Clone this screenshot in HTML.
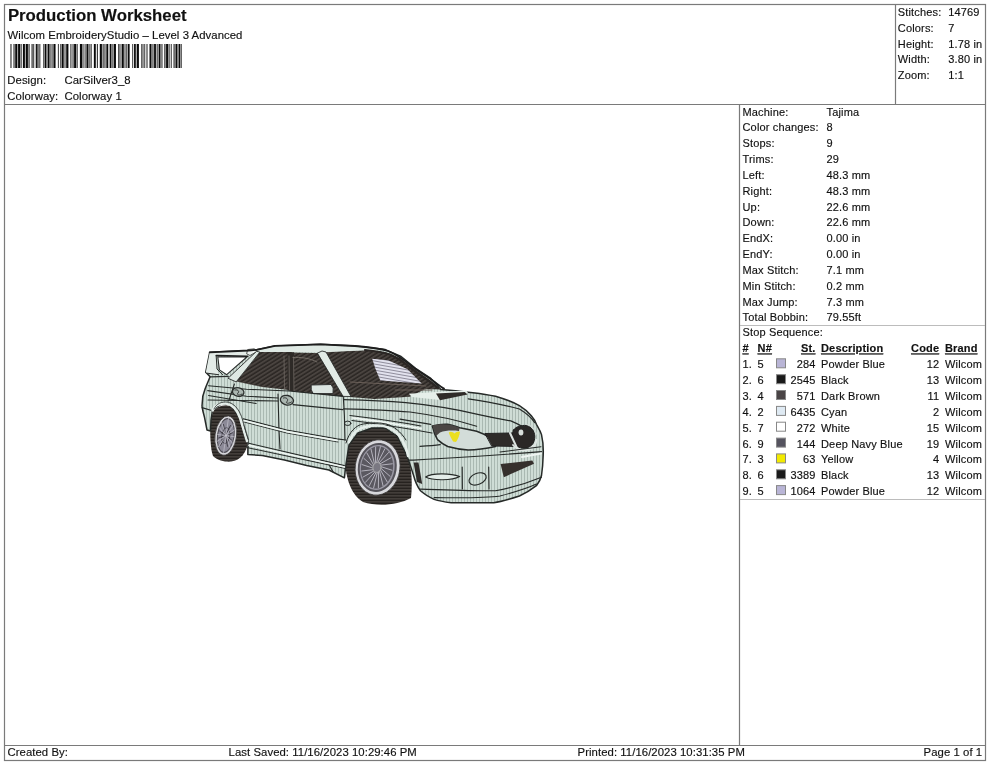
<!DOCTYPE html>
<html><head><meta charset="utf-8"><style>
html,body{margin:0;padding:0;background:#fff;width:990px;height:762px;overflow:hidden}
svg{display:block;will-change:transform}
text{font-family:"Liberation Sans",sans-serif;stroke:#111;stroke-width:0.15px}
</style></head><body>
<svg width="990" height="762" viewBox="0 0 990 762">
<rect width="990" height="762" fill="#fff"/>

<rect x="4.5" y="4.5" width="981" height="756" fill="none" stroke="#7a7a7a" stroke-width="1.2"/>
<line x1="4" y1="104.5" x2="986" y2="104.5" stroke="#7a7a7a" stroke-width="1.2"/>
<line x1="895.5" y1="4" x2="895.5" y2="105" stroke="#7a7a7a" stroke-width="1.2"/>
<line x1="739.5" y1="104" x2="739.5" y2="746" stroke="#7a7a7a" stroke-width="1.2"/>
<line x1="4" y1="745.5" x2="986" y2="745.5" stroke="#7a7a7a" stroke-width="1.2"/>
<line x1="740" y1="325.5" x2="985" y2="325.5" stroke="#bcbcbc" stroke-width="1"/>
<line x1="740" y1="499.5" x2="985" y2="499.5" stroke="#bcbcbc" stroke-width="1"/>

<g><rect x="10" y="44" width="1" height="24" fill="rgb(130,130,130)"/><rect x="11" y="44" width="1" height="24" fill="rgb(140,140,140)"/><rect x="13" y="44" width="1" height="24" fill="rgb(140,140,140)"/><rect x="14" y="44" width="1" height="24" fill="rgb(130,130,130)"/><rect x="15" y="44" width="1" height="24" fill="rgb(60,60,60)"/><rect x="16" y="44" width="1" height="24" fill="rgb(10,10,10)"/><rect x="17" y="44" width="1" height="24" fill="rgb(160,160,160)"/><rect x="18" y="44" width="1" height="24" fill="rgb(30,30,30)"/><rect x="19" y="44" width="1" height="24" fill="rgb(10,10,10)"/><rect x="20" y="44" width="1" height="24" fill="rgb(150,150,150)"/><rect x="21" y="44" width="1" height="24" fill="rgb(110,110,110)"/><rect x="22" y="44" width="1" height="24" fill="rgb(230,230,230)"/><rect x="23" y="44" width="1" height="24" fill="rgb(10,10,10)"/><rect x="24" y="44" width="1" height="24" fill="rgb(30,30,30)"/><rect x="25" y="44" width="1" height="24" fill="rgb(170,170,170)"/><rect x="26" y="44" width="1" height="24" fill="rgb(10,10,10)"/><rect x="27" y="44" width="1" height="24" fill="rgb(30,30,30)"/><rect x="28" y="44" width="1" height="24" fill="rgb(140,140,140)"/><rect x="29" y="44" width="1" height="24" fill="rgb(120,120,120)"/><rect x="31" y="44" width="1" height="24" fill="rgb(150,150,150)"/><rect x="32" y="44" width="1" height="24" fill="rgb(110,110,110)"/><rect x="33" y="44" width="1" height="24" fill="rgb(90,90,90)"/><rect x="34" y="44" width="1" height="24" fill="rgb(210,210,210)"/><rect x="35" y="44" width="1" height="24" fill="rgb(190,190,190)"/><rect x="36" y="44" width="1" height="24" fill="rgb(20,20,20)"/><rect x="37" y="44" width="1" height="24" fill="rgb(100,100,100)"/><rect x="38" y="44" width="1" height="24" fill="rgb(130,130,130)"/><rect x="39" y="44" width="1" height="24" fill="rgb(110,110,110)"/><rect x="40" y="44" width="1" height="24" fill="rgb(180,180,180)"/><rect x="43" y="44" width="1" height="24" fill="rgb(100,100,100)"/><rect x="44" y="44" width="1" height="24" fill="rgb(140,140,140)"/><rect x="45" y="44" width="1" height="24" fill="rgb(10,10,10)"/><rect x="46" y="44" width="1" height="24" fill="rgb(130,130,130)"/><rect x="47" y="44" width="1" height="24" fill="rgb(140,140,140)"/><rect x="48" y="44" width="1" height="24" fill="rgb(10,10,10)"/><rect x="49" y="44" width="1" height="24" fill="rgb(110,110,110)"/><rect x="50" y="44" width="1" height="24" fill="rgb(130,130,130)"/><rect x="51" y="44" width="1" height="24" fill="rgb(150,150,150)"/><rect x="52" y="44" width="1" height="24" fill="rgb(130,130,130)"/><rect x="53" y="44" width="1" height="24" fill="rgb(110,110,110)"/><rect x="54" y="44" width="1" height="24" fill="rgb(10,10,10)"/><rect x="55" y="44" width="1" height="24" fill="rgb(120,120,120)"/><rect x="57" y="44" width="1" height="24" fill="rgb(230,230,230)"/><rect x="58" y="44" width="1" height="24" fill="rgb(80,80,80)"/><rect x="60" y="44" width="1" height="24" fill="rgb(100,100,100)"/><rect x="61" y="44" width="1" height="24" fill="rgb(140,140,140)"/><rect x="62" y="44" width="1" height="24" fill="rgb(10,10,10)"/><rect x="63" y="44" width="1" height="24" fill="rgb(80,80,80)"/><rect x="64" y="44" width="1" height="24" fill="rgb(150,150,150)"/><rect x="65" y="44" width="1" height="24" fill="rgb(150,150,150)"/><rect x="66" y="44" width="1" height="24" fill="rgb(60,60,60)"/><rect x="67" y="44" width="1" height="24" fill="rgb(10,10,10)"/><rect x="68" y="44" width="1" height="24" fill="rgb(150,150,150)"/><rect x="70" y="44" width="1" height="24" fill="rgb(120,120,120)"/><rect x="71" y="44" width="1" height="24" fill="rgb(160,160,160)"/><rect x="72" y="44" width="1" height="24" fill="rgb(150,150,150)"/><rect x="73" y="44" width="1" height="24" fill="rgb(130,130,130)"/><rect x="74" y="44" width="1" height="24" fill="rgb(30,30,30)"/><rect x="75" y="44" width="1" height="24" fill="rgb(10,10,10)"/><rect x="76" y="44" width="1" height="24" fill="rgb(150,150,150)"/><rect x="77" y="44" width="1" height="24" fill="rgb(110,110,110)"/><rect x="79" y="44" width="1" height="24" fill="rgb(230,230,230)"/><rect x="80" y="44" width="1" height="24" fill="rgb(10,10,10)"/><rect x="81" y="44" width="1" height="24" fill="rgb(10,10,10)"/><rect x="82" y="44" width="1" height="24" fill="rgb(140,140,140)"/><rect x="83" y="44" width="1" height="24" fill="rgb(140,140,140)"/><rect x="84" y="44" width="1" height="24" fill="rgb(170,170,170)"/><rect x="85" y="44" width="1" height="24" fill="rgb(130,130,130)"/><rect x="86" y="44" width="1" height="24" fill="rgb(110,110,110)"/><rect x="87" y="44" width="1" height="24" fill="rgb(10,10,10)"/><rect x="88" y="44" width="1" height="24" fill="rgb(130,130,130)"/><rect x="89" y="44" width="1" height="24" fill="rgb(120,120,120)"/><rect x="90" y="44" width="1" height="24" fill="rgb(150,150,150)"/><rect x="91" y="44" width="1" height="24" fill="rgb(110,110,110)"/><rect x="93" y="44" width="1" height="24" fill="rgb(220,220,220)"/><rect x="94" y="44" width="1" height="24" fill="rgb(10,10,10)"/><rect x="95" y="44" width="1" height="24" fill="rgb(60,60,60)"/><rect x="96" y="44" width="1" height="24" fill="rgb(220,220,220)"/><rect x="97" y="44" width="1" height="24" fill="rgb(60,60,60)"/><rect x="99" y="44" width="1" height="24" fill="rgb(200,200,200)"/><rect x="100" y="44" width="1" height="24" fill="rgb(10,10,10)"/><rect x="101" y="44" width="1" height="24" fill="rgb(30,30,30)"/><rect x="102" y="44" width="1" height="24" fill="rgb(160,160,160)"/><rect x="103" y="44" width="1" height="24" fill="rgb(110,110,110)"/><rect x="104" y="44" width="1" height="24" fill="rgb(130,130,130)"/><rect x="105" y="44" width="1" height="24" fill="rgb(150,150,150)"/><rect x="106" y="44" width="1" height="24" fill="rgb(90,90,90)"/><rect x="107" y="44" width="1" height="24" fill="rgb(10,10,10)"/><rect x="108" y="44" width="1" height="24" fill="rgb(190,190,190)"/><rect x="109" y="44" width="1" height="24" fill="rgb(170,170,170)"/><rect x="110" y="44" width="1" height="24" fill="rgb(10,10,10)"/><rect x="111" y="44" width="1" height="24" fill="rgb(130,130,130)"/><rect x="112" y="44" width="1" height="24" fill="rgb(120,120,120)"/><rect x="113" y="44" width="1" height="24" fill="rgb(150,150,150)"/><rect x="114" y="44" width="1" height="24" fill="rgb(10,10,10)"/><rect x="115" y="44" width="1" height="24" fill="rgb(20,20,20)"/><rect x="118" y="44" width="1" height="24" fill="rgb(80,80,80)"/><rect x="119" y="44" width="1" height="24" fill="rgb(130,130,130)"/><rect x="120" y="44" width="1" height="24" fill="rgb(150,150,150)"/><rect x="121" y="44" width="1" height="24" fill="rgb(150,150,150)"/><rect x="122" y="44" width="1" height="24" fill="rgb(10,10,10)"/><rect x="123" y="44" width="1" height="24" fill="rgb(60,60,60)"/><rect x="124" y="44" width="1" height="24" fill="rgb(150,150,150)"/><rect x="125" y="44" width="1" height="24" fill="rgb(150,150,150)"/><rect x="126" y="44" width="1" height="24" fill="rgb(100,100,100)"/><rect x="127" y="44" width="1" height="24" fill="rgb(170,170,170)"/><rect x="128" y="44" width="1" height="24" fill="rgb(10,10,10)"/><rect x="129" y="44" width="1" height="24" fill="rgb(100,100,100)"/><rect x="132" y="44" width="1" height="24" fill="rgb(90,90,90)"/><rect x="133" y="44" width="1" height="24" fill="rgb(220,220,220)"/><rect x="134" y="44" width="1" height="24" fill="rgb(20,20,20)"/><rect x="135" y="44" width="1" height="24" fill="rgb(60,60,60)"/><rect x="136" y="44" width="1" height="24" fill="rgb(170,170,170)"/><rect x="137" y="44" width="1" height="24" fill="rgb(10,10,10)"/><rect x="138" y="44" width="1" height="24" fill="rgb(30,30,30)"/><rect x="141" y="44" width="1" height="24" fill="rgb(100,100,100)"/><rect x="142" y="44" width="1" height="24" fill="rgb(140,140,140)"/><rect x="143" y="44" width="1" height="24" fill="rgb(150,150,150)"/><rect x="144" y="44" width="1" height="24" fill="rgb(100,100,100)"/><rect x="145" y="44" width="1" height="24" fill="rgb(210,210,210)"/><rect x="146" y="44" width="1" height="24" fill="rgb(140,140,140)"/><rect x="147" y="44" width="1" height="24" fill="rgb(140,140,140)"/><rect x="149" y="44" width="1" height="24" fill="rgb(130,130,130)"/><rect x="150" y="44" width="1" height="24" fill="rgb(10,10,10)"/><rect x="151" y="44" width="1" height="24" fill="rgb(120,120,120)"/><rect x="152" y="44" width="1" height="24" fill="rgb(130,130,130)"/><rect x="153" y="44" width="1" height="24" fill="rgb(150,150,150)"/><rect x="154" y="44" width="1" height="24" fill="rgb(30,30,30)"/><rect x="155" y="44" width="1" height="24" fill="rgb(30,30,30)"/><rect x="156" y="44" width="1" height="24" fill="rgb(180,180,180)"/><rect x="157" y="44" width="1" height="24" fill="rgb(110,110,110)"/><rect x="158" y="44" width="1" height="24" fill="rgb(150,150,150)"/><rect x="159" y="44" width="1" height="24" fill="rgb(10,10,10)"/><rect x="160" y="44" width="1" height="24" fill="rgb(120,120,120)"/><rect x="161" y="44" width="1" height="24" fill="rgb(130,130,130)"/><rect x="162" y="44" width="1" height="24" fill="rgb(150,150,150)"/><rect x="164" y="44" width="1" height="24" fill="rgb(100,100,100)"/><rect x="165" y="44" width="1" height="24" fill="rgb(140,140,140)"/><rect x="166" y="44" width="1" height="24" fill="rgb(30,30,30)"/><rect x="167" y="44" width="1" height="24" fill="rgb(10,10,10)"/><rect x="168" y="44" width="1" height="24" fill="rgb(150,150,150)"/><rect x="169" y="44" width="1" height="24" fill="rgb(120,120,120)"/><rect x="170" y="44" width="1" height="24" fill="rgb(200,200,200)"/><rect x="171" y="44" width="1" height="24" fill="rgb(100,100,100)"/><rect x="173" y="44" width="1" height="24" fill="rgb(150,150,150)"/><rect x="174" y="44" width="1" height="24" fill="rgb(110,110,110)"/><rect x="175" y="44" width="1" height="24" fill="rgb(120,120,120)"/><rect x="176" y="44" width="1" height="24" fill="rgb(10,10,10)"/><rect x="177" y="44" width="1" height="24" fill="rgb(130,130,130)"/><rect x="178" y="44" width="1" height="24" fill="rgb(130,130,130)"/><rect x="179" y="44" width="1" height="24" fill="rgb(10,10,10)"/><rect x="180" y="44" width="1" height="24" fill="rgb(150,150,150)"/><rect x="181" y="44" width="1" height="24" fill="rgb(100,100,100)"/></g>
<g><text x="7.9" y="21.2" font-size="16.8" letter-spacing="0" font-weight="bold" fill="#111">Production Worksheet</text><text x="7.6" y="38.9" font-size="11.33" letter-spacing="0.06" fill="#111">Wilcom EmbroideryStudio – Level 3 Advanced</text><text x="7.3" y="83.6" font-size="11.33" letter-spacing="0.06" fill="#111">Design:</text><text x="64.5" y="83.6" font-size="11.33" letter-spacing="0.06" fill="#111">CarSilver3_8</text><text x="7.3" y="99.6" font-size="11.33" letter-spacing="0.06" fill="#111">Colorway:</text><text x="64.5" y="99.6" font-size="11.33" letter-spacing="0.06" fill="#111">Colorway 1</text><text x="897.8" y="15.9" font-size="11" letter-spacing="0.16" fill="#111">Stitches:</text><text x="948.2" y="15.9" font-size="11" letter-spacing="0.16" fill="#111">14769</text><text x="897.8" y="31.75" font-size="11" letter-spacing="0.16" fill="#111">Colors:</text><text x="948.2" y="31.75" font-size="11" letter-spacing="0.16" fill="#111">7</text><text x="897.8" y="47.6" font-size="11" letter-spacing="0.16" fill="#111">Height:</text><text x="948.2" y="47.6" font-size="11" letter-spacing="0.16" fill="#111">1.78 in</text><text x="897.8" y="63.449999999999996" font-size="11" letter-spacing="0.16" fill="#111">Width:</text><text x="948.2" y="63.449999999999996" font-size="11" letter-spacing="0.16" fill="#111">3.80 in</text><text x="897.8" y="79.3" font-size="11" letter-spacing="0.16" fill="#111">Zoom:</text><text x="948.2" y="79.3" font-size="11" letter-spacing="0.16" fill="#111">1:1</text><text x="742.5" y="115.6" font-size="11" letter-spacing="0.16" fill="#111">Machine:</text><text x="826.5" y="115.6" font-size="11" letter-spacing="0.16" fill="#111">Tajima</text><text x="742.5" y="131.43" font-size="11" letter-spacing="0.16" fill="#111">Color changes:</text><text x="826.5" y="131.43" font-size="11" letter-spacing="0.16" fill="#111">8</text><text x="742.5" y="147.26" font-size="11" letter-spacing="0.16" fill="#111">Stops:</text><text x="826.5" y="147.26" font-size="11" letter-spacing="0.16" fill="#111">9</text><text x="742.5" y="163.09" font-size="11" letter-spacing="0.16" fill="#111">Trims:</text><text x="826.5" y="163.09" font-size="11" letter-spacing="0.16" fill="#111">29</text><text x="742.5" y="178.92" font-size="11" letter-spacing="0.16" fill="#111">Left:</text><text x="826.5" y="178.92" font-size="11" letter-spacing="0.16" fill="#111">48.3 mm</text><text x="742.5" y="194.75" font-size="11" letter-spacing="0.16" fill="#111">Right:</text><text x="826.5" y="194.75" font-size="11" letter-spacing="0.16" fill="#111">48.3 mm</text><text x="742.5" y="210.57999999999998" font-size="11" letter-spacing="0.16" fill="#111">Up:</text><text x="826.5" y="210.57999999999998" font-size="11" letter-spacing="0.16" fill="#111">22.6 mm</text><text x="742.5" y="226.41" font-size="11" letter-spacing="0.16" fill="#111">Down:</text><text x="826.5" y="226.41" font-size="11" letter-spacing="0.16" fill="#111">22.6 mm</text><text x="742.5" y="242.24" font-size="11" letter-spacing="0.16" fill="#111">EndX:</text><text x="826.5" y="242.24" font-size="11" letter-spacing="0.16" fill="#111">0.00 in</text><text x="742.5" y="258.07" font-size="11" letter-spacing="0.16" fill="#111">EndY:</text><text x="826.5" y="258.07" font-size="11" letter-spacing="0.16" fill="#111">0.00 in</text><text x="742.5" y="273.9" font-size="11" letter-spacing="0.16" fill="#111">Max Stitch:</text><text x="826.5" y="273.9" font-size="11" letter-spacing="0.16" fill="#111">7.1 mm</text><text x="742.5" y="289.73" font-size="11" letter-spacing="0.16" fill="#111">Min Stitch:</text><text x="826.5" y="289.73" font-size="11" letter-spacing="0.16" fill="#111">0.2 mm</text><text x="742.5" y="305.56" font-size="11" letter-spacing="0.16" fill="#111">Max Jump:</text><text x="826.5" y="305.56" font-size="11" letter-spacing="0.16" fill="#111">7.3 mm</text><text x="742.5" y="321.39" font-size="11" letter-spacing="0.16" fill="#111">Total Bobbin:</text><text x="826.5" y="321.39" font-size="11" letter-spacing="0.16" fill="#111">79.55ft</text><text x="742.5" y="336.3" font-size="11" letter-spacing="0.16" fill="#111">Stop Sequence:</text><text x="742.5" y="352.4" font-size="11" letter-spacing="0.16" font-weight="bold" fill="#111" text-decoration="underline">#</text><text x="757.6" y="352.4" font-size="11" letter-spacing="0.16" font-weight="bold" fill="#111" text-decoration="underline">N#</text><text x="815.6" y="352.4" font-size="11" letter-spacing="0.16" font-weight="bold" text-anchor="end" fill="#111" text-decoration="underline">St.</text><text x="821.0" y="352.4" font-size="11" letter-spacing="0.16" font-weight="bold" fill="#111" text-decoration="underline">Description</text><text x="939.2" y="352.4" font-size="11" letter-spacing="0.16" font-weight="bold" text-anchor="end" fill="#111" text-decoration="underline">Code</text><text x="945.0" y="352.4" font-size="11" letter-spacing="0.16" font-weight="bold" fill="#111" text-decoration="underline">Brand</text><text x="742.5" y="368.3" font-size="11" letter-spacing="0.16" fill="#111">1.</text><text x="757.6" y="368.3" font-size="11" letter-spacing="0.16" fill="#111">5</text><text x="815.6" y="368.3" font-size="11" letter-spacing="0.16" text-anchor="end" fill="#111">284</text><text x="821.0" y="368.3" font-size="11" letter-spacing="0.16" fill="#111">Powder Blue</text><text x="939.2" y="368.3" font-size="11" letter-spacing="0.16" text-anchor="end" fill="#111">12</text><text x="945.0" y="368.3" font-size="11" letter-spacing="0.16" fill="#111">Wilcom</text><text x="742.5" y="384.15000000000003" font-size="11" letter-spacing="0.16" fill="#111">2.</text><text x="757.6" y="384.15000000000003" font-size="11" letter-spacing="0.16" fill="#111">6</text><text x="815.6" y="384.15000000000003" font-size="11" letter-spacing="0.16" text-anchor="end" fill="#111">2545</text><text x="821.0" y="384.15000000000003" font-size="11" letter-spacing="0.16" fill="#111">Black</text><text x="939.2" y="384.15000000000003" font-size="11" letter-spacing="0.16" text-anchor="end" fill="#111">13</text><text x="945.0" y="384.15000000000003" font-size="11" letter-spacing="0.16" fill="#111">Wilcom</text><text x="742.5" y="400.0" font-size="11" letter-spacing="0.16" fill="#111">3.</text><text x="757.6" y="400.0" font-size="11" letter-spacing="0.16" fill="#111">4</text><text x="815.6" y="400.0" font-size="11" letter-spacing="0.16" text-anchor="end" fill="#111">571</text><text x="821.0" y="400.0" font-size="11" letter-spacing="0.16" fill="#111">Dark Brown</text><text x="939.2" y="400.0" font-size="11" letter-spacing="0.16" text-anchor="end" fill="#111">11</text><text x="945.0" y="400.0" font-size="11" letter-spacing="0.16" fill="#111">Wilcom</text><text x="742.5" y="415.85" font-size="11" letter-spacing="0.16" fill="#111">4.</text><text x="757.6" y="415.85" font-size="11" letter-spacing="0.16" fill="#111">2</text><text x="815.6" y="415.85" font-size="11" letter-spacing="0.16" text-anchor="end" fill="#111">6435</text><text x="821.0" y="415.85" font-size="11" letter-spacing="0.16" fill="#111">Cyan</text><text x="939.2" y="415.85" font-size="11" letter-spacing="0.16" text-anchor="end" fill="#111">2</text><text x="945.0" y="415.85" font-size="11" letter-spacing="0.16" fill="#111">Wilcom</text><text x="742.5" y="431.7" font-size="11" letter-spacing="0.16" fill="#111">5.</text><text x="757.6" y="431.7" font-size="11" letter-spacing="0.16" fill="#111">7</text><text x="815.6" y="431.7" font-size="11" letter-spacing="0.16" text-anchor="end" fill="#111">272</text><text x="821.0" y="431.7" font-size="11" letter-spacing="0.16" fill="#111">White</text><text x="939.2" y="431.7" font-size="11" letter-spacing="0.16" text-anchor="end" fill="#111">15</text><text x="945.0" y="431.7" font-size="11" letter-spacing="0.16" fill="#111">Wilcom</text><text x="742.5" y="447.55" font-size="11" letter-spacing="0.16" fill="#111">6.</text><text x="757.6" y="447.55" font-size="11" letter-spacing="0.16" fill="#111">9</text><text x="815.6" y="447.55" font-size="11" letter-spacing="0.16" text-anchor="end" fill="#111">144</text><text x="821.0" y="447.55" font-size="11" letter-spacing="0.16" fill="#111">Deep Navy Blue</text><text x="939.2" y="447.55" font-size="11" letter-spacing="0.16" text-anchor="end" fill="#111">19</text><text x="945.0" y="447.55" font-size="11" letter-spacing="0.16" fill="#111">Wilcom</text><text x="742.5" y="463.4" font-size="11" letter-spacing="0.16" fill="#111">7.</text><text x="757.6" y="463.4" font-size="11" letter-spacing="0.16" fill="#111">3</text><text x="815.6" y="463.4" font-size="11" letter-spacing="0.16" text-anchor="end" fill="#111">63</text><text x="821.0" y="463.4" font-size="11" letter-spacing="0.16" fill="#111">Yellow</text><text x="939.2" y="463.4" font-size="11" letter-spacing="0.16" text-anchor="end" fill="#111">4</text><text x="945.0" y="463.4" font-size="11" letter-spacing="0.16" fill="#111">Wilcom</text><text x="742.5" y="479.25" font-size="11" letter-spacing="0.16" fill="#111">8.</text><text x="757.6" y="479.25" font-size="11" letter-spacing="0.16" fill="#111">6</text><text x="815.6" y="479.25" font-size="11" letter-spacing="0.16" text-anchor="end" fill="#111">3389</text><text x="821.0" y="479.25" font-size="11" letter-spacing="0.16" fill="#111">Black</text><text x="939.2" y="479.25" font-size="11" letter-spacing="0.16" text-anchor="end" fill="#111">13</text><text x="945.0" y="479.25" font-size="11" letter-spacing="0.16" fill="#111">Wilcom</text><text x="742.5" y="495.1" font-size="11" letter-spacing="0.16" fill="#111">9.</text><text x="757.6" y="495.1" font-size="11" letter-spacing="0.16" fill="#111">5</text><text x="815.6" y="495.1" font-size="11" letter-spacing="0.16" text-anchor="end" fill="#111">1064</text><text x="821.0" y="495.1" font-size="11" letter-spacing="0.16" fill="#111">Powder Blue</text><text x="939.2" y="495.1" font-size="11" letter-spacing="0.16" text-anchor="end" fill="#111">12</text><text x="945.0" y="495.1" font-size="11" letter-spacing="0.16" fill="#111">Wilcom</text><text x="7.5" y="756.1" font-size="11.33" letter-spacing="0.06" fill="#111">Created By:</text><text x="228.6" y="756.1" font-size="11.33" letter-spacing="0.06" fill="#111">Last Saved: 11/16/2023 10:29:46 PM</text><text x="577.6" y="756.1" font-size="11.33" letter-spacing="0.06" fill="#111">Printed: 11/16/2023 10:31:35 PM</text><text x="982.2" y="756.1" font-size="11.33" letter-spacing="0.06" text-anchor="end" fill="#111">Page 1 of 1</text></g>
<g><rect x="776.5" y="358.8" width="9" height="9" fill="#b9b5d6" stroke="#888" stroke-width="1"/><rect x="776.5" y="374.7" width="9" height="9" fill="#1a1a1a" stroke="#888" stroke-width="1"/><rect x="776.5" y="390.5" width="9" height="9" fill="#4a4446" stroke="#888" stroke-width="1"/><rect x="776.5" y="406.4" width="9" height="9" fill="#dfeaf3" stroke="#888" stroke-width="1"/><rect x="776.5" y="422.2" width="9" height="9" fill="#ffffff" stroke="#888" stroke-width="1"/><rect x="776.5" y="438.1" width="9" height="9" fill="#55535f" stroke="#888" stroke-width="1"/><rect x="776.5" y="453.9" width="9" height="9" fill="#f2ea00" stroke="#888" stroke-width="1"/><rect x="776.5" y="469.8" width="9" height="9" fill="#1a1a1a" stroke="#888" stroke-width="1"/><rect x="776.5" y="485.6" width="9" height="9" fill="#b9b5d6" stroke="#888" stroke-width="1"/></g>
<defs>
<pattern id="bodyp" width="3" height="6" patternUnits="userSpaceOnUse">
<rect width="3" height="6" fill="#cfddd6"/><rect x="2" width="1" height="6" fill="#aab9b2"/>
</pattern>
<pattern id="winp" width="3.4" height="3.4" patternUnits="userSpaceOnUse" patternTransform="rotate(-32)">
<rect width="3.4" height="3.4" fill="#4a4440"/><rect y="1.9" width="3.4" height="1.5" fill="#2a2623"/>
</pattern>
<pattern id="tirep" width="4" height="3" patternUnits="userSpaceOnUse">
<rect width="4" height="3" fill="#433e3a"/><rect y="1.6" width="4" height="1.4" fill="#26221f"/>
</pattern>
<pattern id="reflp" width="4" height="3" patternUnits="userSpaceOnUse" patternTransform="rotate(10)">
<rect width="4" height="3" fill="#e2e2ee"/><rect y="2" width="4" height="1" fill="#8f8d9c"/>
</pattern>
</defs>
<g id="car" stroke-linejoin="round" stroke-linecap="round">
<!-- tires -->
<path d="M212.9,412 C210,420 210,432 210.5,440 C211,447 211.5,452 213,456 C218,461 226,462 231,461.6 C236,461 240,458.5 242.7,455.3 C246,451 247.5,446 247.5,442.7 C247,432 245,420 240,413 C236,408 231,405.5 226,405.3 C220,405.5 215,408 212.9,412 Z" fill="url(#tirep)"/>
<path d="M346,450 C343,470 349,494 363,502 C378,507 398,505 411,498 C413,480 411,460 405,447 C398,433 386,426 373,426 C361,427 351,437 346,450 Z" fill="url(#tirep)"/>
<!-- body -->
<path d="M209.7,352.3 L248.5,350.5 L256.6,349.8 L275,345.9 L320.5,344.3 L355,346 L385.3,349.6 L400.5,356.2 L415.6,368.3 L430.8,378.4 L440.9,389.4 C460,391 480,393 495.5,396.2 C505,399 513,402 519.4,405.6 C525,409 529,413 531.3,415.8 C534,419 535.5,421.5 536.4,424.3 C538.5,428 540.5,431 541.5,434.6 C543,441 543.5,448 543.2,455 C543,462 542.5,469 541.5,475.5 C540.5,480 538.5,483 536.4,485.7 C531,490 526,493 519.4,496 C510,499 502,501.5 493.8,502.8 L451.2,502.8 C445,502 439,501 434.1,499.4 C428,496.5 424,494 420.5,490.8 C417,486 415,481 413.6,475.5 L408.5,460.1 L405,452 L397,436 L385,428 L372,428 L358,433 L349,445 L346,464 L344.4,477.8 L328.9,470 L306.7,465.6 L284.4,460 L262.2,455.6 L247.8,454.4 L248,441 L243,425 L235.2,410.8 L228.7,404.3 L222.2,403.5 L212.5,410 L211,420 L210.5,431 L207,430 L204.5,417.3 L202.8,410.8 L202,406 L202.8,396.2 L205.3,388.2 L210.1,376.8 L206.5,373.1 L205.7,372.3 Z" fill="url(#bodyp)" stroke="#262a28" stroke-width="1.5"/>
<!-- spoiler light -->
<path d="M209.7,352.6 L248.5,350.8 L256,350.6 L247.7,356.5 L216.2,356 L217,369 L219,374.5 L206.5,373.1 L205.9,372 Z" fill="#e3ebe7"/>
<path d="M248,349.5 L254.5,348.8 L257,351.5 L250,355.5 L247,354 Z" fill="#eef3f0" stroke="#2b2e2c" stroke-width="0.8"/>
<!-- spoiler gap -->
<path d="M217.8,357 L246.9,357 L226.7,374.7 L219.4,369.9 Z" fill="#fff" stroke="#2b2e2c" stroke-width="1.1"/>
<!-- windows -->
<path d="M236.4,381.6 L259.8,352.1 L289,351.8 L289,390 L262,387 Z" fill="url(#winp)"/>
<path d="M293,391.5 L293,352.5 L317.7,353 L343,396.4 Z" fill="url(#winp)"/>
<path d="M287.5,351.8 L294,352.3 L294,391.5 L287.5,390.5 Z" fill="#2e2a27"/>
<path d="M284,356 L284.5,389 M289,356 L289.5,390 M293.5,357 L294,391" stroke="#77706a" stroke-width="0.7"/>
<path d="M293,357.5 C300,357 310,358 317,362" fill="none" stroke="#77706a" stroke-width="0.9"/>
<path d="M325,351.8 L365,350.3 L385.3,352.3 L400.5,358.5 L415.6,370.3 L430.8,380.4 L440.9,389.4 L425.7,389 L409.5,396.7 L374.4,398.9 L350,397 Z" fill="url(#winp)"/>
<path d="M372.2,358.7 L388.3,360.2 L407.5,369.3 L421.7,383.4 L380.3,380.4 L375.2,368.3 Z" fill="url(#reflp)"/>
<path d="M350,382 L388,384 L426,386 M395,390 L432,390" fill="none" stroke="#6a5f58" stroke-width="1"/>
<!-- roof strip -->
<path d="M256.6,350.3 L275,346.6 L320.5,345 L355,346.8 L385.3,350.3 L365,350.3 L320,352.5 L290,352 L259.8,352.1 Z" fill="#dfe9e4"/>
<path d="M209.7,352.3 L248.5,350.5 L256.6,349.8 L275,345.9 L320.5,344.3 L355,346 C370,347.3 380,348.5 388,351 C396,354 404,360 412,366.5 C420,372.5 428,377 434,381.5 C438,384.5 441,387 444,388.6" fill="none" stroke="#1e1e1e" stroke-width="1.8"/>
<path d="M365,350 C375,351 383,352 390,354.5 C398,358 405,363 412,369 C420,375 428,380 438,388" fill="none" stroke="#2a2624" stroke-width="2.2"/>
<!-- pillars -->
<path d="M228.3,378 L256.6,351.3 L259.8,352.1 L236.4,381.6 Z" fill="#dfe9e4" stroke="#2b2e2c" stroke-width="0.9"/>
<path d="M317.7,353 L322,351 L326,352 L351,396.5 L343.5,396.4 Z" fill="#e2ebe6" stroke="#2b2e2c" stroke-width="0.9"/>
<!-- spoiler details -->
<path d="M216.2,355.6 L247.7,356.2" stroke="#1e1e1e" stroke-width="1.6"/>
<path d="M216.2,356.2 L217,369 L222.6,374.7" fill="none" stroke="#2b2e2c" stroke-width="1"/>
<path d="M206.5,373.1 L218.6,374.7" fill="none" stroke="#2b2e2c" stroke-width="1"/>
<path d="M210.1,376.8 L228.3,376.4" fill="none" stroke="#2b2e2c" stroke-width="1.2"/>
<!-- mirror -->
<path d="M311.4,385 L331,384.5 L333.2,388 L333,393.6 L313,393.6 L311.4,390 Z" fill="#dce5e1" stroke="#333" stroke-width="1"/>
<!-- hood scoop -->
<path d="M408.8,393.8 L436,392 L466.4,390.6 L468,393 L440,400 L412,397 Z" fill="#e6efea"/>
<path d="M436,393.5 L464.8,392 L467.5,394.5 L440,400.2 Z" fill="#2f2b28"/>
<!-- headlight -->
<path d="M432.4,426 C438,424.5 443,424 447.7,424.3 C452,425 456,426.5 459.7,427.7 C466,429 471,430 476.7,431.2 C482,433 487,435.5 490.4,438 C492.5,440.5 494.5,443.5 495.5,446.5 C486,448.5 477,449.8 468.2,450 C461,449.5 454,448.3 447.7,446.5 C443,444.5 440,442 437.5,439.7 C435,435.5 433.4,430.5 432.4,426 Z" fill="#d3ddd9" stroke="#262a28" stroke-width="1.6"/>
<path d="M432.5,425.6 C438,424 444,423.8 450,424.8 C454,425.8 457,426.8 459.5,428 L459,431 C452,430 445,430.5 440,432.5 L436,436 C434.5,432.5 433,429 432.5,425.6 Z" fill="#4a4644"/>
<path d="M448.8,432.5 C451,431 453,432.5 454.5,433.5 C456,432 458.5,430.8 460,432 C459.5,435.5 458,439 456,442 L453,441.5 C451.5,438.5 449.5,435.5 448.8,432.5 Z" fill="#ecdf1e"/>
<!-- grille -->
<path d="M485.3,433.5 L516,432.9 L517,446.5 L492,446 Z" fill="#2e2b29" stroke="#222" stroke-width="1"/>
<path d="M513.5,430 C516,426.5 521,425 526.5,425.5 C531.5,427 534.5,431 534.8,436.5 C534.8,442 532,446.5 527,448 C521,449 516,447 513.5,442 C512,438 512,433.5 513.5,430 Z" fill="#2a2726" stroke="#1e1e1e" stroke-width="1"/>
<path d="M510,433 L517,448" stroke="#dde4e1" stroke-width="2"/>
<path d="M515,450 C523,451 531,449 535,444" fill="none" stroke="#dce4e0" stroke-width="1.6"/>
<ellipse cx="521" cy="432.5" rx="2.4" ry="3" fill="#d8dfdc"/>
<path d="M513,445 C517,450 525,451.5 531,449 C534,447.5 536,444 536.5,440" fill="none" stroke="#dfe6e3" stroke-width="1.8"/>
<path d="M527,424.5 C531,425.5 535,429 536.5,434" fill="none" stroke="#cfd7d3" stroke-width="1.2"/>
<!-- lower bumper -->
<path d="M500.6,464 L532.3,460.5 L534,463.8 L503.8,477.2 Z" fill="#36302d"/>
<path d="M413.6,462.5 L418.5,462.5 L422.2,484 L417,482 Z" fill="#2e2b29"/>
<path d="M425.6,477 C432,472.9 450,472.9 459.7,476.5 C452,480.6 433,480.8 425.6,477 Z" fill="#e3ece8" stroke="#262a28" stroke-width="1.1"/>
<ellipse cx="477.6" cy="478.9" rx="9" ry="5.6" fill="none" stroke="#262a28" stroke-width="1.1" transform="rotate(-22 477.6 478.9)"/>
<g fill="none" stroke="#262a28" stroke-width="1.1">
<path d="M408.5,460.1 L413.6,460.1 C450,458 500,455 541.5,451.6"/>
<path d="M462.2,467 L462.4,489"/>
<path d="M488.7,467 L489,489"/>
<path d="M420.5,489.1 C450,490 475,491 495.5,490.8 C515,487 530,482 541.5,477.2"/>
<path d="M434.1,497.6 C460,498 490,497.5 500,496 C515,492 528,488 536.4,484"/>
<path d="M500,452 L541,446.7"/>
</g>
<path d="M522,457 L541,453.5" stroke="#eef4f1" stroke-width="2"/>
<!-- hood lines -->
<g fill="none" stroke="#262a28" stroke-width="1.2">
<path d="M343.6,399.7 C370,400.5 390,401.5 405.8,402.7 C430,405 455,409 480,414.8 C495,418 505,420 510.8,420.9 C518,424 524,427 529.6,431.2"/>
<path d="M343.6,408.8 C370,409.5 390,410.3 410,412 C440,416 460,421 476.6,426.2"/>
<path d="M350,415.5 C375,418.5 400,422 421,426"/>
<path d="M352,420.5 C380,424 410,429 432,433"/>
<path d="M468.2,398.8 C485,401 500,404 519.4,409 C526,413 531,417 534.7,422.6"/>
<path d="M400,419.2 L430.7,424.3"/>
<path d="M420,446.4 C428,446 435,445.5 440.2,444.7"/>
</g>
<path d="M352.7,417.9 C380,421 400,425 421,428.5" fill="none" stroke="#eef5f1" stroke-width="1.6"/>
<!-- side lines -->
<g fill="none" stroke="#262a28" stroke-width="1.1">
<path d="M208.5,385.7 L246.5,389.2 L289,391 L343,396.4"/>
<path d="M207.7,390.6 L246.5,396.2 L278,398"/>
<path d="M208.5,395.5 L256.2,403.5"/>
<path d="M202,407.6 L212.5,410.8"/>
<path d="M234.4,384 L228.7,401"/>


<path d="M278,394 L279,430 L280,448.9"/>
<path d="M293,404.6 L343,409.6"/>
<path d="M208,400 L278,401"/>
<path d="M343.3,397 L344.4,416 L345,440"/>
<path d="M243.3,418.9 L286.7,430 L336.7,438.9 L346,440"/>
<path d="M244,422 L286.7,433 L338,442" stroke="#262a28" stroke-width="0.9"/>
<path d="M248.9,443.3 L344.4,465.6"/>
<path d="M246.7,447.5 L345.6,468.5"/>
<path d="M328.9,464.4 L333.3,472.2"/>
</g>
<path d="M244,420.6 L286.7,431.6 L337,440.4" fill="none" stroke="#eef5f1" stroke-width="1.6"/>
<path d="M249,445.3 L344.5,467" fill="none" stroke="#eef5f1" stroke-width="1.5"/>
<g stroke="#2a2e2c" stroke-width="1.3" fill="#aab6b0">
<ellipse cx="238.2" cy="392" rx="5.8" ry="4.3" transform="rotate(12 238.2 392)"/>
<ellipse cx="286.9" cy="400.2" rx="6.6" ry="4.8" transform="rotate(12 286.9 400.2)"/>
</g>
<g fill="none" stroke="#2a2e2c" stroke-width="0.9">
<path d="M235,390 C237,389 240,391 238,393 C236,395 240,396 242,394"/>
<path d="M283.5,398 C286,397 289,399 287,401.5 C285,403.5 289,404 291.5,402"/>
</g>
<ellipse cx="347.7" cy="423.3" rx="3.2" ry="2.2" fill="none" stroke="#262a28" stroke-width="1"/>
<!-- arches -->
<path d="M212.5,410.5 C215,405 220,403 226,403.6 C232,404.5 237,410 240,418 C242,424 244,432 247,441" fill="none" stroke="#e5eeea" stroke-width="2.4"/>
<path d="M212.5,410.5 C215,405 220,403 226,403.6 C232,404.5 237,410 240,418 C242,424 244,432 247,441" fill="none" stroke="#262a28" stroke-width="0.8" transform="translate(1.5,-1.5)"/>
<path d="M348.9,442.2 C352,434 357,429 363.3,427.3 C370,425.5 376,425 382,425.6 C390,427 397,432 401,438 C405,444 407,450 408,456" fill="none" stroke="#e5eeea" stroke-width="2.4"/>
<path d="M346,443 C349,432 356,425 363.3,424 C371,422.5 380,422.5 386,424 C394,426 401,432 406,440" fill="none" stroke="#262a28" stroke-width="1"/>
<!-- rear rim -->
<g transform="rotate(8 226 435.6)">
<ellipse cx="225.8" cy="435.6" rx="10.8" ry="19.8" fill="#d6d6da" stroke="#3a3838" stroke-width="0.8"/>
<ellipse cx="225.8" cy="435.6" rx="8.8" ry="17.6" fill="#4a4850"/>
<ellipse cx="225.8" cy="435.6" rx="7.8" ry="16.4" fill="#8c8a98"/>
<g stroke="#3e3c44" stroke-width="0.9" fill="none">
<ellipse cx="225.8" cy="435.6" rx="4" ry="8"/>
<path d="M222,425 L229,446 M229,425 L222,446 M219,432 L232,439 M232,432 L219,439"/>
</g>
<g stroke="#c8c6d0" stroke-width="0.6">
<path d="M226,418 L226,453.2 M217.4,435.6 L234.6,435.6 M219.6,422.9 L232.4,448.3 M232.4,422.9 L219.6,448.3 M217.5,428 L234.5,443 M234.5,428 L217.5,443"/>
</g>
</g>
<!-- front rim -->
<g transform="rotate(8 377 467.4)">
<ellipse cx="377.6" cy="467.4" rx="22.4" ry="27.8" fill="#d8d8dc" stroke="#3a3838" stroke-width="0.8"/>
<ellipse cx="377.3" cy="467.4" rx="19.4" ry="24.6" fill="#55535a"/>
<ellipse cx="377.2" cy="467.4" rx="17.4" ry="22.6" fill="#9a98a4"/>
<ellipse cx="377" cy="467.4" rx="16" ry="21.2" fill="#5a5860"/>
<g stroke="#b8b6c0" stroke-width="0.9">
<path d="M380.5,467.4 L391.3,474.5 M380.3,468.8 L389.0,480.2 M379.8,470.0 L385.5,484.7 M379.1,471.0 L381.2,487.4 M378.1,471.7 L376.5,488.2 M377.0,471.9 L371.8,486.9 M375.9,471.7 L367.6,483.8 M374.9,471.0 L364.4,479.0 M374.2,470.0 L362.4,473.1 M373.7,468.8 L361.8,466.7 M373.5,467.4 L362.7,460.3 M373.7,466.0 L365.0,454.6 M374.2,464.8 L368.5,450.1 M374.9,463.8 L372.8,447.4 M375.9,463.1 L377.5,446.6 M377.0,462.9 L382.2,447.9 M378.1,463.1 L386.4,451.0 M379.1,463.8 L389.6,455.8 M379.8,464.8 L391.6,461.7 M380.3,466.0 L392.2,468.1"/>
</g>
<ellipse cx="377" cy="467.4" rx="4" ry="5" fill="#7a7882" stroke="#aaa" stroke-width="0.8"/>
</g>
</g>

</svg>
</body></html>
